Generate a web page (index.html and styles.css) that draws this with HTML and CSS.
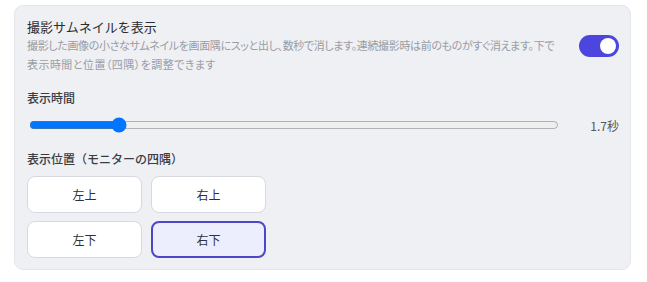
FILE: index.html
```html
<!DOCTYPE html>
<html lang="ja">
<head>
<meta charset="utf-8">
<link rel="stylesheet" href="styles.css">
</head>
<body>
<div class="card">
  <div class="head">
    <div class="head-text">
      <div class="title">撮影サムネイルを表示</div>
      <div class="desc"><span class="line">撮影した画像の小さなサムネイルを画面隅にスッと出し、数秒で消します。連続撮影時は前のものがすぐ消えます。下で</span><br><span class="line2">表示時間と位置（四隅）を調整できます</span></div>
    </div>
    <div class="toggle"><span class="knob"></span></div>
  </div>
  <div class="label lbl-time">表示時間</div>
  <div class="slider-row">
    <input class="slider" type="range" min="0.5" max="8" step="0.1" value="1.7">
    <span class="value">1.7秒</span>
  </div>
  <div class="label lbl-pos">表示位置（モニターの四隅）</div>
  <div class="grid">
    <button class="pos">左上</button>
    <button class="pos">右上</button>
    <button class="pos">左下</button>
    <button class="pos active">右下</button>
  </div>
</div>
</body>
</html>
```

FILE: styles.css
```css
html, body { margin: 0; padding: 0; background: #ffffff; }
body {
  padding: 5px 16px 0 14px;
  font-family: "Noto Sans CJK JP", "Noto Sans", sans-serif;
}
.card {
  background: #eef0f4;
  border: 1px solid #e4e6eb;
  border-radius: 9px;
  padding: 12px 11px 11px 12px;
  height: 265px;
  box-sizing: border-box;
}
.head { display: flex; align-items: center; gap: 20px; }
.head-text { flex: 1; min-width: 0; }
.title { font-size: 13px; line-height: 18px; color: #2b2d33; }
.desc {
  font-size: 11px; line-height: 19px; color: #9a9ca3;
  white-space: nowrap;
}
.line { letter-spacing: -0.35px; font-feature-settings: "palt"; }
.line2 { letter-spacing: 0.45px; font-feature-settings: "palt"; }
.toggle {
  width: 40px; height: 22px; border-radius: 11px;
  background: #4c45de;
  position: relative; flex: none;
}
.knob {
  position: absolute; right: 3px; top: 3px;
  width: 16px; height: 16px; border-radius: 50%; background: #fff;
}
.label { font-size: 12px; line-height: 17px; color: #3a3c42; font-weight: 500; }
.lbl-time { margin-top: 15px; }
.slider-row { display: flex; align-items: center; gap: 10px; margin-top: 10px; height: 18px; }
.slider { flex: 1; margin: 0 0 0 2px; height: 16px; }
.value { width: 50px; text-align: right; font-size: 12px; color: #55575d; }
.lbl-pos { margin-top: 16px; }
.grid {
  display: grid;
  grid-template-columns: 115px 115px;
  grid-auto-rows: 37px;
  gap: 8px 9px;
  margin-top: 9px;
}
.pos {
  font-family: inherit;
  font-size: 12px; color: #2f3136;
  background: #ffffff;
  border: 1px solid #d7d9de;
  border-radius: 8px;
  padding: 0;
}
.pos.active {
  border: 2px solid #4d46c9;
  background: #eceefd;
}
```
